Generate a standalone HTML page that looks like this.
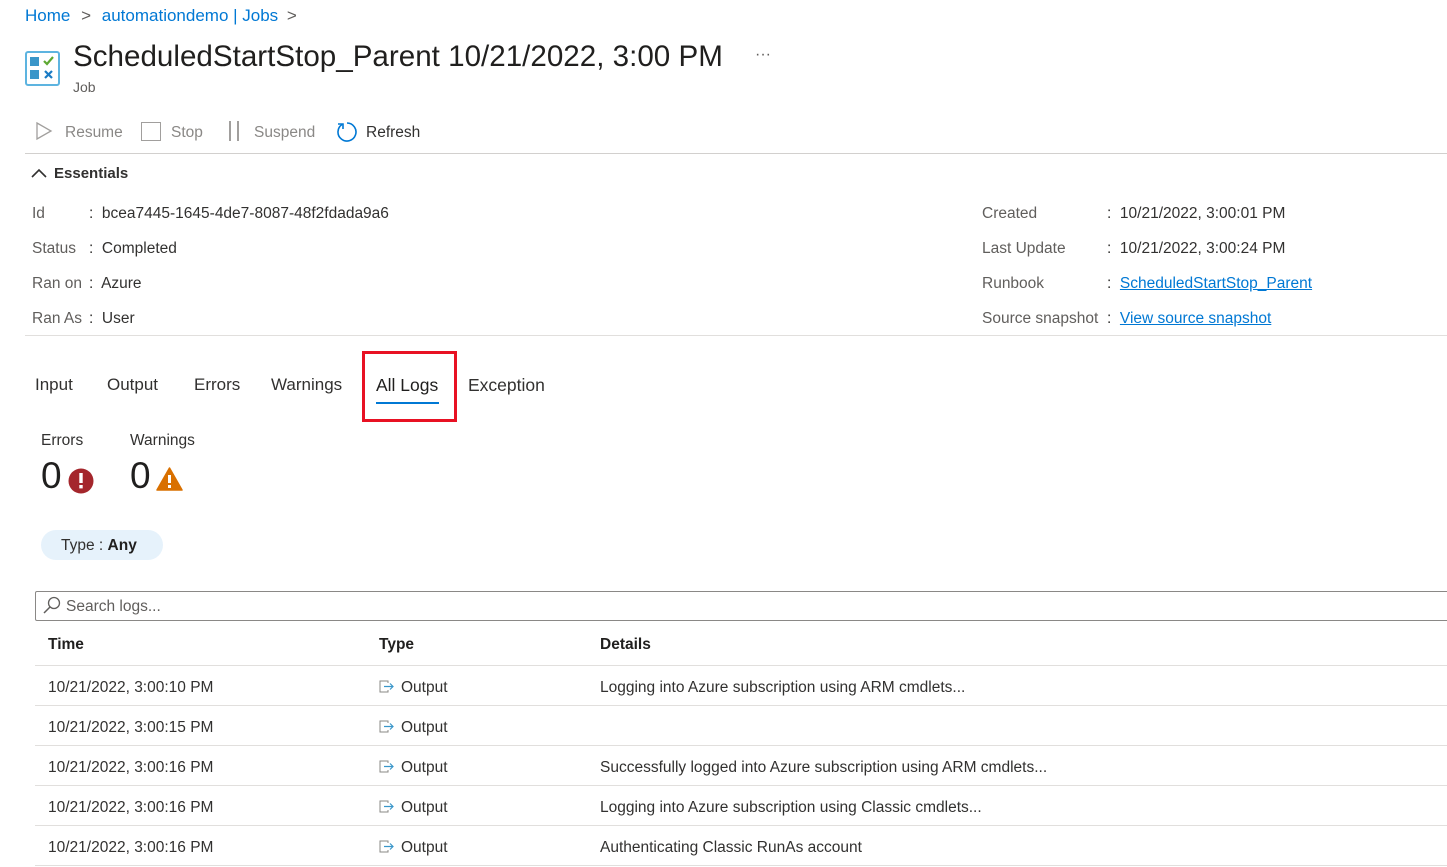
<!DOCTYPE html>
<html><head><meta charset="utf-8"><style>
*{margin:0;padding:0;box-sizing:border-box}
body{width:1447px;height:867px;overflow:hidden;background:#fff;font-family:"Liberation Sans",sans-serif;color:#323130;position:relative;font-size:15.5px}
.a{position:absolute;white-space:nowrap}
.lnk{color:#0078d4}
.gray{color:#8a8886}
.u{color:#0078d4;text-decoration:underline}
.hr{position:absolute;height:1px;background:#e1dfdd}
</style></head><body>
<div class="a" style="left:25px;top:6px;font-size:17px"><span class="lnk">Home</span> <span style="color:#605e5c;margin:0 6px">&gt;</span> <span class="lnk">automationdemo | Jobs</span> <span style="color:#605e5c;margin-left:4px">&gt;</span></div>
<svg class="a" style="left:25px;top:51px" width="35" height="35" viewBox="0 0 35 35"><rect x="1" y="1" width="33" height="33" rx="2" fill="#fff" stroke="#5db4e0" stroke-width="2"/><rect x="5" y="6" width="9" height="9" fill="#3a96c9"/><rect x="5" y="19" width="9" height="9" fill="#3a96c9"/><path d="M19 10l3 3 6-7" stroke="#5ea832" stroke-width="2.2" fill="none"/><path d="M20 20l7 7M27 20l-7 7" stroke="#1a7bc4" stroke-width="2.2"/></svg>
<div class="a" style="left:73px;top:40px;font-size:29.6px;color:#201f1e">ScheduledStartStop_Parent 10/21/2022, 3:00 PM</div>
<div class="a" style="left:755px;top:46px;font-size:16px;color:#605e5c">···</div>
<div class="a" style="left:73px;top:79px;font-size:14px;color:#605e5c">Job</div>
<svg class="a" style="left:35px;top:121px" width="18" height="20"><path d="M2 2l14 8-14 8z" fill="none" stroke="#a19f9d" stroke-width="1.3"/></svg>
<div class="a gray" style="left:65px;top:124px">Resume</div>
<div class="a" style="left:141px;top:122px;width:20px;height:19px;border:1.5px solid #a19f9d"></div>
<div class="a gray" style="left:171px;top:124px">Stop</div>
<div class="a" style="left:229px;top:121px;width:2px;height:20px;background:#a19f9d"></div>
<div class="a" style="left:237px;top:121px;width:2px;height:20px;background:#a19f9d"></div>
<div class="a gray" style="left:254px;top:124px">Suspend</div>
<svg class="a" style="left:335px;top:121px" width="22" height="22"><path d="M7 3.5A9 9 0 1 0 12 2" fill="none" stroke="#0078d4" stroke-width="1.6"/><path d="M3 3h5v5" fill="none" stroke="#0078d4" stroke-width="1.6"/></svg>
<div class="a" style="left:366px;top:124px;color:#323130">Refresh</div>
<div class="hr" style="left:25px;top:153px;width:1422px;background:#d2d0ce"></div>
<svg class="a" style="left:31px;top:167px" width="16" height="12"><path d="M1 10l7-7 7 7" fill="none" stroke="#323130" stroke-width="1.6"/></svg>
<div class="a" style="left:54px;top:165px;font-weight:bold;font-size:15px">Essentials</div>
<div class="a" style="left:32px;top:196px;line-height:35px;color:#605e5c">Id<br>Status<br>Ran on<br>Ran As</div>
<div class="a" style="left:89px;top:196px;line-height:35px">:&nbsp; bcea7445-1645-4de7-8087-48f2fdada9a6<br>:&nbsp; Completed<br>:&nbsp; Azure<br>:&nbsp; User</div>
<div class="a" style="left:982px;top:196px;line-height:35px;color:#605e5c">Created<br>Last Update<br>Runbook<br>Source snapshot</div>
<div class="a" style="left:1107px;top:196px;line-height:35px">:&nbsp; 10/21/2022, 3:00:01 PM<br>:&nbsp; 10/21/2022, 3:00:24 PM<br>:&nbsp; <span class="u">ScheduledStartStop_Parent</span><br>:&nbsp; <span class="u">View source snapshot</span></div>
<div class="hr" style="left:25px;top:335px;width:1422px"></div>
<div class="a" style="left:35px;top:375px;font-size:17px">Input</div>
<div class="a" style="left:107px;top:375px;font-size:17px">Output</div>
<div class="a" style="left:194px;top:375px;font-size:17px">Errors</div>
<div class="a" style="left:271px;top:375px;font-size:17px">Warnings</div>
<div class="a" style="left:376px;top:375px;font-size:17.5px;color:#201f1e">All Logs</div>
<div class="a" style="left:376px;top:402px;width:63px;height:2px;background:#0078d4"></div>
<div class="a" style="left:362px;top:351px;width:95px;height:71px;border:3px solid #e81123"></div>
<div class="a" style="left:468px;top:375px;font-size:17.5px">Exception</div>
<div class="a" style="left:41px;top:432px">Errors</div>
<div class="a" style="left:130px;top:432px">Warnings</div>
<div class="a" style="left:41px;top:455px;font-size:37px;color:#201f1e">0</div>
<div class="a" style="left:130px;top:455px;font-size:37px;color:#201f1e">0</div>
<svg class="a" style="left:68px;top:468px" width="26" height="26"><circle cx="13" cy="13" r="12.5" fill="#a4262c"/><rect x="11.3" y="5" width="3.4" height="10" fill="#fff"/><rect x="11.3" y="17" width="3.4" height="3.4" fill="#fff"/></svg>
<svg class="a" style="left:156px;top:467px" width="27" height="24"><path d="M13.5 1L26 23H1z" fill="#d97000" stroke="#d97000" stroke-linejoin="round" stroke-width="1.5"/><rect x="12" y="8" width="3" height="8" fill="#fff"/><rect x="12" y="18" width="3" height="3" fill="#fff"/></svg>
<div class="a" style="left:41px;top:530px;width:122px;height:30px;border-radius:15px;background:#e6f2fb;padding:7px 0 0 20px">Type : <b style="color:#201f1e">Any</b></div>
<div class="a" style="left:35px;top:591px;width:1420px;height:30px;border:1px solid #8a8886;border-radius:2px"></div>
<svg class="a" style="left:42px;top:596px" width="20" height="20"><circle cx="12" cy="7" r="5.5" fill="none" stroke="#605e5c" stroke-width="1.3"/><path d="M8 11l-6 6" stroke="#605e5c" stroke-width="1.5"/></svg>
<div class="a" style="left:66px;top:598px;color:#605e5c">Search logs...</div>
<div class="a" style="left:48px;top:636px;font-weight:bold;color:#201f1e">Time</div>
<div class="a" style="left:379px;top:636px;font-weight:bold;color:#201f1e">Type</div>
<div class="a" style="left:600px;top:636px;font-weight:bold;color:#201f1e">Details</div>
<div class="hr" style="left:35px;top:665px;width:1412px"></div>
<div id="rows"></div>
<script>
var d=["Logging into Azure subscription using ARM cmdlets...","","Successfully logged into Azure subscription using ARM cmdlets...","Logging into Azure subscription using Classic cmdlets...","Authenticating Classic RunAs account"];
var t=["10","15","16","16","16"],h="";
for(var i=0;i<5;i++){var y=679+i*40;
h+='<div class="a" style="left:48px;top:'+y+'px">10/21/2022, 3:00:'+t[i]+' PM</div>';
h+='<svg class="a" style="left:379px;top:'+(y+1)+'px" width="16" height="14"><path d="M9 3V1H1v11h8v-2" fill="none" stroke="#8a8886"/><path d="M5 6.5h9M11 3.5l3 3-3 3" fill="none" stroke="#3a96c9" stroke-width="1.2"/></svg>';
h+='<div class="a" style="left:401px;top:'+y+'px">Output</div>';
h+='<div class="a" style="left:600px;top:'+y+'px">'+d[i]+'</div>';
h+='<div class="hr" style="left:35px;top:'+(y+26)+'px;width:1412px"></div>';}
document.getElementById('rows').innerHTML=h;
</script>
</body></html>
